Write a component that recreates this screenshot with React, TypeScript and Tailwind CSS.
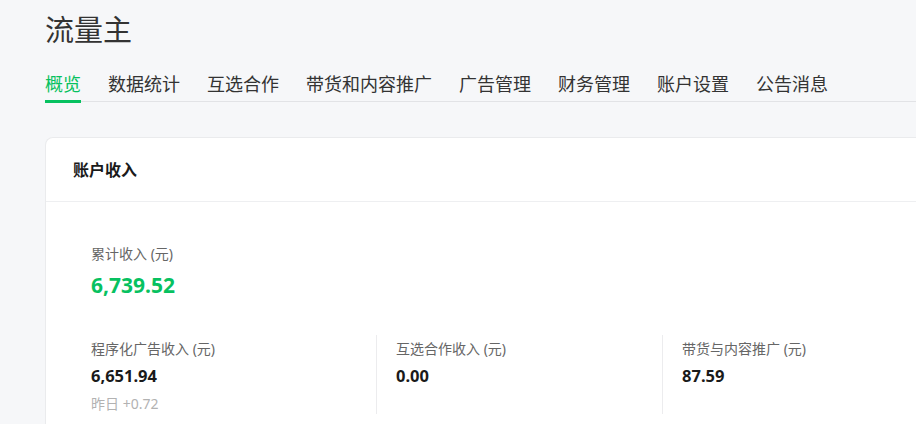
import React from "react";

const tabs = ["概览", "数据统计", "互选合作", "带货和内容推广", "广告管理", "财务管理", "账户设置", "公告消息"];

const stats = [
  { label: "程序化广告收入 (元)", value: "6,651.94", sub: "昨日 +0.72" },
  { label: "互选合作收入 (元)", value: "0.00" },
  { label: "带货与内容推广 (元)", value: "87.59" },
];

export default function App() {
  return (
    <div
      className="min-h-screen w-[916px] h-[424px] overflow-hidden bg-[#f6f7f9] pl-[45px] text-[#333]"
      style={{ fontFamily: '"Noto Sans", "Noto Sans CJK SC", sans-serif' }}
    >
      {/* Page title */}
      <h1 className="pt-[9px] text-[29px] leading-[42px] text-[#333]">流量主</h1>

      {/* Tabs */}
      <div className="mt-[20px] flex gap-[27px] border-b border-[#e2e3e6]">
        {tabs.map((t, i) => (
          <div
            key={t}
            className={
              i === 0
                ? "border-b-[3px] border-[#07c160] pb-[3px] text-[18px] leading-[26px] text-[#07c160] -mb-[2px]"
                : "pb-[3px] text-[18px] leading-[26px] text-[#333] border-b-[3px] border-transparent -mb-[2px]"
            }
          >
            {t}
          </div>
        ))}
      </div>

      {/* Account income card */}
      <div className="mt-[35px] rounded-l-[8px] border border-r-0 border-[#eaebed] bg-white">
        <div className="flex h-[64px] items-center border-b border-[#eeeff1] pl-[27px] text-[16px] font-bold text-[#1a1a1a]">
          账户收入
        </div>

        <div className="pl-[45px] pt-[42px] pb-[32px]">
          <div className="text-[14px] leading-[20px] text-[#666]">累计收入 (元)</div>
          <div className="mt-[6px] text-[21px] font-bold leading-[30px] text-[#07c160]">6,739.52</div>

          <div className="mt-[35px] flex">
            {stats.map((s, i) => (
              <div
                key={s.label}
                className={
                  i === 0
                    ? "w-[285px] shrink-0 pt-[4px]"
                    : "w-[286px] shrink-0 border-l border-[#ececee] pl-[19px] pt-[4px]"
                }
              >
                <div className="text-[14px] leading-[20px] text-[#666]">{s.label}</div>
                <div className="mt-[5px] text-[16.5px] font-bold leading-[24px] text-[#1a1a1a]">{s.value}</div>
                {s.sub ? (
                  <div className="mt-[6px] text-[14px] leading-[20px] text-[#b2b2b2]">{s.sub}</div>
                ) : (
                  <div className="mt-[6px] h-[20px]" />
                )}
              </div>
            ))}
          </div>
        </div>
      </div>
    </div>
  );
}
